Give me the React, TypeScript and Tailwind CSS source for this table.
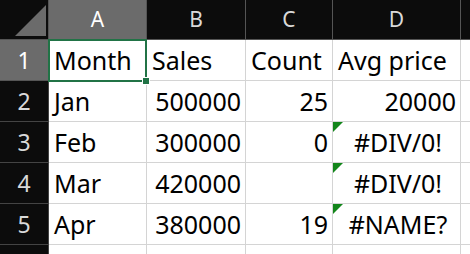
import React from "react";

const cols = ["A", "B", "C", "D"];
const rows: { n: number; cells: { v: string; align: "l" | "r" | "c"; err?: boolean }[] }[] = [
  { n: 1, cells: [ { v: "Month", align: "l" }, { v: "Sales", align: "l" }, { v: "Count", align: "l" }, { v: "Avg price", align: "l" } ] },
  { n: 2, cells: [ { v: "Jan", align: "l" }, { v: "500000", align: "r" }, { v: "25", align: "r" }, { v: "20000", align: "r" } ] },
  { n: 3, cells: [ { v: "Feb", align: "l" }, { v: "300000", align: "r" }, { v: "0", align: "r" }, { v: "#DIV/0!", align: "c", err: true } ] },
  { n: 4, cells: [ { v: "Mar", align: "l" }, { v: "420000", align: "r" }, { v: "", align: "r" }, { v: "#DIV/0!", align: "c", err: true } ] },
  { n: 5, cells: [ { v: "Apr", align: "l" }, { v: "380000", align: "r" }, { v: "19", align: "r" }, { v: "#NAME?", align: "c", err: true } ] },
  { n: 6, cells: [ { v: "", align: "l" }, { v: "", align: "l" }, { v: "", align: "l" }, { v: "", align: "l" } ] },
];

const widths = ["w-[98px]", "w-[99px]", "w-[87px]", "w-[128px]"];

export default function App() {
  return (
    <div
      className="relative w-[470px] h-[254px] overflow-hidden bg-white"
      style={{ fontFamily: '"Noto Sans", "Liberation Sans", sans-serif' }}
    >
      {/* header row */}
      <div className="flex h-[40px]">
        <div className="relative w-[49px] shrink-0 bg-[#0c0c0c] border-r border-b border-[#555]">
          <div
            className="absolute left-[15px] top-[5px] w-[31px] h-[31px] bg-[#6b6b6b]"
            style={{ clipPath: "polygon(100% 0, 100% 100%, 0 100%)" }}
          />
        </div>
        {cols.map((c, i) => (
          <div
            key={c}
            className={`${widths[i]} shrink-0 flex items-center justify-center text-[21px] border-r border-b ${
              i === 0
                ? "bg-[#6b6b6b] text-white border-[#555] border-b-[#217346]"
                : "bg-[#0c0c0c] text-[#d9d9d9] border-[#555]"
            }`}
          >
            {c}
          </div>
        ))}
        <div className="flex-1 bg-[#0c0c0c] border-b border-[#555]" />
      </div>
      {rows.map((r) => (
        <div key={r.n} className="flex h-[41px]">
          <div
            className={`w-[49px] shrink-0 flex items-center justify-center text-[23px] border-r border-b ${
              r.n === 1 ? "bg-[#6b6b6b] text-white border-[#555]" : "bg-[#0c0c0c] text-[#d9d9d9] border-[#444]"
            }`}
          >
            {r.n < 6 ? r.n : ""}
          </div>
          {r.cells.map((cell, i) => (
            <div
              key={i}
              className={`${widths[i]} shrink-0 relative flex items-center text-[25px] text-black border-r border-b border-[#d4d4d4] ${
                cell.align === "l" ? "justify-start pl-[5px]" : cell.align === "r" ? "justify-end pr-[4px]" : "justify-center pl-[3px]"
              }`}
            >
              {cell.err && (
                <div
                  className="absolute left-0 top-0 w-[10px] h-[10px] bg-[#13861b]"
                  style={{ clipPath: "polygon(0 0, 100% 0, 0 100%)" }}
                />
              )}
              <span className="whitespace-nowrap leading-none">{cell.v}</span>
            </div>
          ))}
          <div className="flex-1 border-b border-[#d4d4d4]" />
        </div>
      ))}
      {/* selection */}
      <div className="absolute left-[48px] top-[39px] w-[99px] h-[43px] border-2 border-[#217346] pointer-events-none" />
      <div className="absolute left-[142px] top-[77px] w-[8px] h-[8px] bg-[#217346] border border-white" />
    </div>
  );
}
